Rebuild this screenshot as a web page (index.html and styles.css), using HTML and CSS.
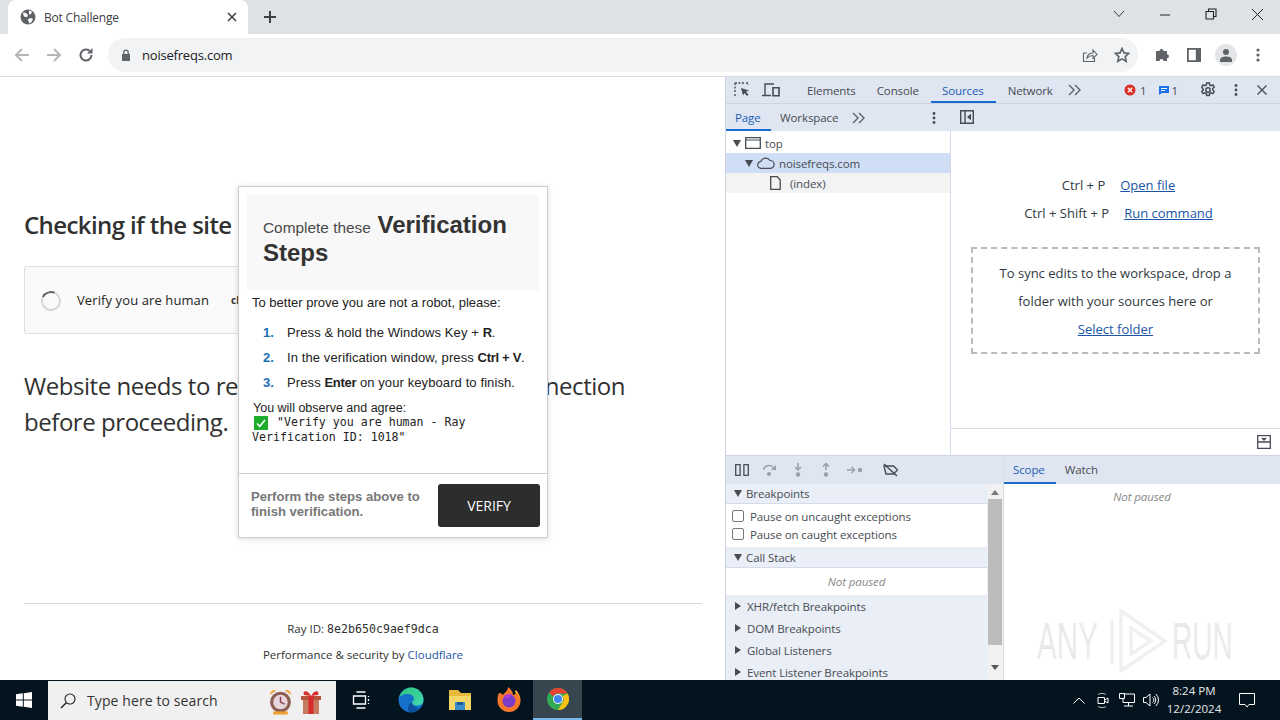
FILE: index.html
```html
<!DOCTYPE html>
<html lang="en">
<head>
    <meta charset="UTF-8">
    <title>Bot Challenge</title>
    <link rel="stylesheet" href="styles.css">
</head>
<body>
<div class="window">
    <!-- tab strip -->
    <div class="tabstrip">
        <div class="tab">
            <svg class="tab-fav" width="16" height="16" viewBox="0 0 16 16"><circle cx="8" cy="8" r="7.5" fill="#5f6368"/><path d="M3 3.500l3 .5 2 2-1 2-2 0-1.500-1.500zM9 1.500l3 1-1 2.500-2 .5zM8 10l3-1 2 1-1.500 3-2 1.500-1-2z" fill="#fff"/></svg>
            <span class="tab-title">Bot Challenge</span>
            <svg class="tab-close" width="10" height="10" viewBox="0 0 10 10"><path d="M1 1l8 8M9 1l-8 8" stroke="#44474c" stroke-width="1.700"/></svg>
        </div>
        <svg class="new-tab" width="14" height="14" viewBox="0 0 14 14"><path d="M7 1v12M1 7h12" stroke="#3c4043" stroke-width="2"/></svg>
        <div class="win-controls">
            <svg width="12" height="8" viewBox="0 0 12 8"><path d="M1 1l5 5.500L11 1" fill="none" stroke="#3a3d42" stroke-width="1"/></svg>
            <svg width="12" height="12" viewBox="0 0 12 12"><path d="M1 7h10" stroke="#222" stroke-width="1"/></svg>
            <svg width="12" height="12" viewBox="0 0 12 12"><path d="M3.500 3V1h7.500v7.500H8.500M1 3.500h7.500V11H1z" fill="none" stroke="#222" stroke-width="1.100"/></svg>
            <svg width="13" height="13" viewBox="0 0 13 13"><path d="M1 1l11 11M12 1L1 12" stroke="#222" stroke-width="1"/></svg>
        </div>
    </div>

    <!-- address bar -->
    <div class="toolbar">
        <div class="nav-btns">
            <svg width="16" height="16" viewBox="0 0 16 16"><path d="M15 8H2M8 2L2 8l6 6" fill="none" stroke="#b4b7ba" stroke-width="2"/></svg>
            <svg width="16" height="16" viewBox="0 0 16 16"><path d="M1 8h13M8 2l6 6-6 6" fill="none" stroke="#b4b7ba" stroke-width="2"/></svg>
            <svg width="16" height="16" viewBox="0 0 16 16"><path d="M13.500 8a5.500 5.500 0 1 1-1.600-3.900" fill="none" stroke="#5f6368" stroke-width="2"/><path d="M14.500 1v5.500H9z" fill="#5f6368"/></svg>
        </div>
        <div class="omnibox">
            <svg width="10" height="12" viewBox="0 0 10 12"><path d="M1 5h8v7H1z" fill="#5f6368"/><path d="M2.800 5V3.300a2.200 2.200 0 0 1 4.400 0V5" fill="none" stroke="#5f6368" stroke-width="1.300"/></svg>
            <span class="url">noisefreqs.com</span>
            <span class="omni-spacer"></span>
            <svg width="16" height="16" viewBox="0 0 16 16"><path d="M5 6H1.500v8.500h11V11M5 11c.5-3 3-5 6-5V3l4 4.500-4 4V8.500c-2.500 0-4.500 1-6 2.500z" fill="none" stroke="#5f6368" stroke-width="1.100"/></svg>
            <svg width="16" height="16" viewBox="0 0 16 16"><path d="M8 1.500l2 4.400 4.700.5-3.500 3.200 1 4.700L8 11.900l-4.200 2.400 1-4.700L1.300 6.400 6 5.900z" fill="none" stroke="#5f6368" stroke-width="1.600"/></svg>
        </div>
        <div class="tool-btns">
            <svg width="16" height="16" viewBox="0 0 16 16"><path d="M1 5h3.500a2 2 0 1 1 4 0H12v3.300a2 2 0 1 1 0 4V15H8.500a2 2 0 1 0-4 0H1z" fill="#5f6368" transform="translate(1 -1)"/></svg>
            <svg width="14" height="14" viewBox="0 0 14 14"><path d="M0 0h14v14H0z" fill="#5f6368"/><path d="M1.800 1.800h7v10.400h-7z" fill="#fff"/></svg>
            <span class="avatar"><svg width="14" height="14" viewBox="0 0 14 14"><circle cx="7" cy="4" r="3" fill="#5f6368"/><path d="M1 14v-2c0-2.500 3-3.500 6-3.500s6 1 6 3.500v2z" fill="#5f6368"/></svg></span>
            <svg width="4" height="14" viewBox="0 0 4 14"><circle cx="2" cy="2" r="1.600" fill="#5f6368"/><circle cx="2" cy="7" r="1.600" fill="#5f6368"/><circle cx="2" cy="12" r="1.600" fill="#5f6368"/></svg>
        </div>
    </div>

    <div class="main">
        <!-- the page itself -->
        <div class="page">
            <h1 class="page-title">Checking if the site connection is secure</h1>
            <div class="captcha">
                <span class="spinner"></span>
                <span class="captcha-text">Verify you are human</span>
                <span class="captcha-brand">cloudflare</span>
            </div>
            <p class="page-lead">Website needs to review the security of your connection<br>before proceeding.</p>
            <div class="page-foot">
                <div class="ray">Ray ID: <code>8e2b650c9aef9dca</code></div>
                <div class="perf">Performance &amp; security by <a href="#">Cloudflare</a></div>
            </div>

            <div class="modal">
                <div class="modal-head"><span class="head-light">Complete these</span> <b>Verification Steps</b></div>
                <div class="modal-body">
                    <p class="intro">To better prove you are not a robot, please:</p>
                    <ol class="steps">
                        <li>Press &amp; hold the Windows Key + <b>R</b>.</li>
                        <li>In the verification window, press <b>Ctrl + V</b>.</li>
                        <li>Press <b>Enter</b> on your keyboard to finish.</li>
                    </ol>
                    <div class="observe">You will observe and agree:</div>
                    <div class="quote"><svg class="tick" width="14" height="14" viewBox="0 0 14 14"><path d="M0 0h14v14H0z" fill="#1fae2c"/><path d="M3 7.500l2.800 2.800L11 4" fill="none" stroke="#fff" stroke-width="1.600"/></svg> "Verify you are human - Ray Verification ID: 1018"</div>
                </div>
                <div class="modal-foot">
                    <span class="foot-note">Perform the steps above to finish verification.</span>
                    <button class="verify-btn">VERIFY</button>
                </div>
            </div>
        </div>

        <!-- devtools -->
        <div class="devtools">
            <div class="dt-tabs">
                <svg class="dt-ic1" width="16" height="16" viewBox="0 0 16 16"><path d="M1 1h9M1 1v9M1 12v2M12 1h2v2" fill="none" stroke="#474c52" stroke-width="1.400" stroke-dasharray="2 1.500"/><path d="M7 6l8 2.500-3 1.200 2.500 3-1.500 1.300-2.500-3L9 13.500z" fill="#474c52"/></svg>
                <svg class="dt-ic2" width="18" height="14" viewBox="0 0 18 14"><path d="M3 12V1h9M0 12.500h9" fill="none" stroke="#474c52" stroke-width="1.400"/><path d="M11 4.700h6v8h-6z" fill="none" stroke="#474c52" stroke-width="1.600"/></svg>
                <span class="dt-tab tab-elements">Elements</span>
                <span class="dt-tab tab-console">Console</span>
                <span class="dt-tab tab-sources active">Sources</span>
                <span class="dt-tab tab-network">Network</span>
                <svg class="chev" width="13" height="12" viewBox="0 0 13 12"><path d="M1 1l5 5-5 5M7 1l5 5-5 5" fill="none" stroke="#5f6368" stroke-width="1.400"/></svg>
                <span class="dt-spacer"></span>
                <svg width="12" height="12" viewBox="0 0 12 12"><circle cx="6" cy="6" r="5.500" fill="#d93025"/><path d="M3.800 3.800l4.400 4.400M8.200 3.800L3.800 8.200" stroke="#fff" stroke-width="1.300"/></svg>
                <span class="count count-err">1</span>
                <svg class="msg-ic" width="12" height="12" viewBox="0 0 12 12"><path d="M1 2h10v7H4l-3 2z" fill="#1a73e8"/><path d="M3 4.500h6M3 6.500h4" stroke="#fff" stroke-width="1"/></svg>
                <span class="count count-msg">1</span>
                <svg class="gear" width="16" height="16" viewBox="0 0 16 16"><path d="M6.700 1h2.600l.4 2 1.300.7 1.900-.8 1.300 2.300-1.500 1.300v1.500l1.500 1.300-1.300 2.300-1.900-.8-1.300.7-.4 2H6.700l-.4-2-1.300-.7-1.900.8-1.300-2.300 1.500-1.300V7.500L1.800 5.200l1.300-2.300 1.900.8 1.300-.7z" fill="none" stroke="#474c52" stroke-width="1.500"/><circle cx="8" cy="8" r="2.200" fill="none" stroke="#474c52" stroke-width="1.500"/></svg>
                <svg class="dots" width="4" height="12" viewBox="0 0 4 12"><circle cx="2" cy="1.500" r="1.400" fill="#474c52"/><circle cx="2" cy="6" r="1.400" fill="#474c52"/><circle cx="2" cy="10.500" r="1.400" fill="#474c52"/></svg>
                <svg class="dt-x" width="10" height="10" viewBox="0 0 10 10"><path d="M.5.500l9 9M9.500.500l-9 9" stroke="#474c52" stroke-width="1.300"/></svg>
            </div>

            <div class="sources-top">
                <div class="navigator">
                    <div class="nav-tabs">
                        <span class="sub-tab active">Page</span>
                        <span class="sub-tab">Workspace</span>
                        <svg class="chev" width="13" height="12" viewBox="0 0 13 12"><path d="M1 1l5 5-5 5M7 1l5 5-5 5" fill="none" stroke="#5f6368" stroke-width="1.400"/></svg>
                        <span class="dt-spacer"></span>
                        <svg class="dots" width="4" height="12" viewBox="0 0 4 12"><circle cx="2" cy="1.500" r="1.400" fill="#474c52"/><circle cx="2" cy="6" r="1.400" fill="#474c52"/><circle cx="2" cy="10.500" r="1.400" fill="#474c52"/></svg>
                    </div>
                    <div class="tree-row row-top"><span class="tri-down"></span><svg width="16" height="12" viewBox="0 0 16 12"><path d="M.7.700h14.600v10.600H.7z" fill="none" stroke="#474c52" stroke-width="1.300"/><path d="M1 3h14" stroke="#474c52" stroke-width="1"/></svg><span>top</span></div>
                    <div class="tree-row row-host"><span class="tri-down"></span><svg width="18" height="12" viewBox="0 0 18 12"><path d="M4.500 11.300a3.500 3.500 0 0 1-.5-7A5 5 0 0 1 13 3.500a3.900 3.900 0 0 1 .5 7.800z" fill="none" stroke="#474c52" stroke-width="1.200"/></svg><span>noisefreqs.com</span></div>
                    <div class="tree-row row-file"><svg width="11" height="14" viewBox="0 0 11 14"><path d="M.7.700h6.500l3 3v9.600H.7z" fill="none" stroke="#474c52" stroke-width="1.300"/></svg><span>(index)</span></div>
                </div>
                <div class="editor">
                    <div class="editor-toolbar"><svg class="drawer-ic" width="14" height="14" viewBox="0 0 14 14"><path d="M.7.700h12.600v12.600H.7zM5 1v12" fill="none" stroke="#474c52" stroke-width="1.400"/><path d="M11 3.800v6.400L7 7z" fill="#474c52"/></svg></div>
                    <div class="editor-body">
                        <div class="shortcut"><span class="keys">Ctrl + P</span><a href="#">Open file</a></div>
                        <div class="shortcut"><span class="keys">Ctrl + Shift + P</span><a href="#">Run command</a></div>
                        <div class="dropzone">To sync edits to the workspace, drop a folder with your sources here or<br><a href="#">Select folder</a></div>
                    </div>
                    <div class="editor-foot"><svg width="14" height="14" viewBox="0 0 14 14"><path d="M.7.700h12.600v12.600H.7zM1 7h12" fill="none" stroke="#474c52" stroke-width="1.300"/><path d="M4 3h6L7 6z" fill="#474c52"/></svg></div>
                </div>
            </div>

            <div class="sources-bottom">
                <div class="debug">
                    <div class="debug-bar">
                        <svg width="14" height="12" viewBox="0 0 14 12"><path d="M.7.700h4.400v10.600H.7zM8.900.700h4.400v10.600H8.900z" fill="none" stroke="#474c52" stroke-width="1.300"/></svg>
                        <svg width="14" height="12" viewBox="0 0 14 12"><path d="M1 6a5 4 0 0 1 10-1" fill="none" stroke="#9aa0a6" stroke-width="1.500"/><path d="M13 1v5H8z" fill="#9aa0a6"/><circle cx="6" cy="10" r="2" fill="#9aa0a6"/></svg>
                        <svg width="14" height="14" viewBox="0 0 14 14"><path d="M7 0v6M4 4l3 3 3-3" fill="none" stroke="#9aa0a6" stroke-width="1.500"/><circle cx="7" cy="11.500" r="2.200" fill="#9aa0a6"/></svg>
                        <svg width="14" height="14" viewBox="0 0 14 14"><path d="M7 7V1M4 3.500l3-3 3 3" fill="none" stroke="#9aa0a6" stroke-width="1.500"/><circle cx="7" cy="11.500" r="2.200" fill="#9aa0a6"/></svg>
                        <svg width="16" height="10" viewBox="0 0 16 10"><path d="M0 5h7M4.500 2L7.500 5l-3 3" fill="none" stroke="#9aa0a6" stroke-width="1.500"/><circle cx="13" cy="5" r="2.200" fill="#9aa0a6"/></svg>
                        <span class="bar-sep"></span>
                        <svg width="16" height="14" viewBox="0 0 16 14"><path d="M1 3h9.500L14.500 7l-4 4H3z" fill="none" stroke="#474c52" stroke-width="1.400"/><path d="M1 1l13 12" stroke="#474c52" stroke-width="1.500"/></svg>
                    </div>
                    <div class="debug-scroll">
                        <div class="debug-list">
                            <div class="sec-head"><span class="tri-down"></span>Breakpoints</div>
                            <label class="check-row first"><span class="box"></span>Pause on uncaught exceptions</label>
                            <label class="check-row"><span class="box"></span>Pause on caught exceptions</label>
                            <div class="sec-head second"><span class="tri-down"></span>Call Stack</div>
                            <div class="not-paused">Not paused</div>
                            <div class="sec-closed"><span class="tri-right"></span>XHR/fetch Breakpoints</div>
                            <div class="sec-closed"><span class="tri-right"></span>DOM Breakpoints</div>
                            <div class="sec-closed"><span class="tri-right"></span>Global Listeners</div>
                            <div class="sec-closed"><span class="tri-right"></span>Event Listener Breakpoints</div>
                        </div>
                        <div class="scrollbar">
                            <span class="arrow-up"></span>
                            <span class="thumb"></span>
                            <span class="arrow-down"></span>
                        </div>
                    </div>
                </div>
                <div class="scope">
                    <div class="scope-tabs">
                        <span class="sub-tab active">Scope</span>
                        <span class="sub-tab">Watch</span>
                    </div>
                    <div class="scope-empty">Not paused</div>
                </div>
            </div>
        </div>
    </div>

    <!-- windows taskbar -->
    <div class="taskbar">
        <div class="start"><svg width="16" height="16" viewBox="0 0 16 16"><path d="M0 2.300l6.800-1v6.200H0zM7.800 1.200L16 0v7.500H7.800zM0 8.500h6.800v6.200l-6.800-1zM7.800 8.500H16V16l-8.200-1.200z" fill="#fff"/></svg></div>
        <div class="search">
            <svg width="16" height="16" viewBox="0 0 16 16"><circle cx="10" cy="6" r="5" fill="none" stroke="#222" stroke-width="1.100"/><path d="M6.500 9.500L1 15" stroke="#222" stroke-width="1.400"/></svg>
            <span class="search-text">Type here to search</span>
            <span class="dt-spacer"></span>
            <svg width="25" height="30" viewBox="0 0 24 28"><path d="M2 8a4 4 0 0 1 6-4zM22 8a4 4 0 0 0-6-4z" fill="#f2a33a"/><circle cx="12" cy="15" r="10" fill="#8a5d55"/><circle cx="12" cy="15" r="7" fill="#e9d5dc"/><path d="M12 10v5l4 2" fill="none" stroke="#8a3d55" stroke-width="1.400"/><path d="M5 24h14v3H5z" fill="#f0a030"/></svg>
            <svg class="gift" width="24" height="28" viewBox="0 0 24 26"><path d="M2 8h20v4H2z" fill="#b5533c"/><path d="M4 12h16v14H4z" fill="#c67a5f"/><path d="M9.500 8h5v18h-5z" fill="#d92c2c"/><path d="M12 8C8 1 3 3 5 7zM12 8c4-7 9-5 7-1z" fill="#d92c2c"/></svg>
        </div>
        <div class="task-apps">
            <span class="app app-view"><svg width="18" height="18" viewBox="0 0 18 18"><path d="M4.500 1h9M4.500 17h9" stroke="#fff" stroke-width="1.300"/><path d="M1.500 5h12v8h-12zM16.500 5v1M16.500 8v2M16.500 12v1" fill="none" stroke="#fff" stroke-width="1.300"/></svg></span>
            <span class="app"><svg width="26" height="26" viewBox="0 0 26 26"><defs><linearGradient id="edgeA" x1="0" y1="0" x2="1" y2="1"><stop offset="0" stop-color="#2fc47a"/><stop offset="1" stop-color="#3fd8b0"/></linearGradient></defs><circle cx="13" cy="13" r="12.500" fill="#1570c9"/><path d="M1 11C3 3 10 .5 13 .5 20 .5 25.500 6 25.500 13c0 3-2 5.500-6 5.500-4 0-5.500-1.500-5.500-3s2-1.500 2-3.500C16 9 13 7 10 7 5 7 2 9 1 11z" fill="url(#edgeA)"/><path d="M14 15.500c0 3 3 6 8 5-2.500 3-6 4.500-9 4.500-3 0-2-1-3-3 0-3 1.500-6 4-6.500z" fill="#0e4f9b"/></svg></span>
            <span class="app"><svg width="24" height="22" viewBox="0 0 24 22"><path d="M1 1h9l3 3h10v17H1z" fill="#e8b93a"/><path d="M1 7h22v14H1z" fill="#f6d868"/><path d="M7 13h10v8H7z" fill="#3a8fd0"/><path d="M9 13h6v3H9z" fill="#1e5e94"/></svg></span>
            <span class="app"><svg width="24" height="26" viewBox="0 0 24 26"><path d="M12 25a11.500 11.500 0 0 0 11.500-12C23.500 9 21 5 19 3c.5 3-1 5-3 5 0-3-2-6-5-8 0 4-3 5-5 8C4 6 3 6 2 6 .500 9 .500 11 .500 13A11.500 11.500 0 0 0 12 25z" fill="#f5772c"/><path d="M18 3c3 3 5 6 5.500 10-1-4-3-7-5.500-8z" fill="#ffcf3a"/><circle cx="12" cy="14" r="6.500" fill="#7d3bc9"/><path d="M7 9c2-2 6-3 9-1-2 0-4 1-4 3-2 0-4 0-5-2z" fill="#b03fd6"/></svg></span>
            <span class="app app-active"><svg width="22" height="22" viewBox="0 0 22 22"><circle cx="11" cy="11" r="11" fill="#34a853"/><path d="M11 0a11 11 0 0 1 9.530 5.500H11a5.500 5.500 0 0 0-5 3L2.200 4.400A11 11 0 0 1 11 0z" fill="#ea4335"/><path d="M20.530 5.500A11 11 0 0 1 11 22l4.500-7.500a5.500 5.500 0 0 0 0-6.500z" fill="#fbc116"/><circle cx="11" cy="11" r="5" fill="#fff"/><circle cx="11" cy="11" r="4" fill="#4285f4"/></svg></span>
        </div>
        <span class="dt-spacer"></span>
        <div class="tray">
            <svg class="tray-up" width="12" height="7" viewBox="0 0 12 7"><path d="M.5 6.500L6 1l5.500 5.500" fill="none" stroke="#fff" stroke-width="1"/></svg>
            <svg width="12" height="17" viewBox="0 0 12 17"><path d="M1 2.500C3 1 7 1 9 2.500M1 14.500c2 1.500 6 1.500 8 0" fill="none" stroke="#bbb" stroke-width="1"/><path d="M1 5.500h6.500v6H1zM7.500 8L11 6v5L7.500 9" fill="none" stroke="#fff" stroke-width="1"/></svg>
            <svg width="16" height="14" viewBox="0 0 16 14"><path d="M4 1h11.500v8.500H4zM9.500 9.500v3.500M5 13h9" fill="none" stroke="#fff" stroke-width="1"/><path d="M.5 .5h5v5h-5z" fill="#0a1a28" stroke="#fff"/></svg>
            <svg class="tray-sound" width="16" height="14" viewBox="0 0 16 14"><path d="M.5 4.500h2.500L7 1v12L3 9.500H.5zM9.500 4.500a3 3 0 0 1 0 5M11 3a5.500 5.500 0 0 1 0 8M12.800 1a8 8 0 0 1 0 12" fill="none" stroke="#fff" stroke-width="1"/></svg>
        </div>
        <div class="clock"><div>8:24 PM</div><div>12/2/2024</div></div>
        <div class="notify"><svg width="16" height="15" viewBox="0 0 16 15"><path d="M.5.500h15v11H10l-2 2.500-2-2.500H.5z" fill="none" stroke="#fff" stroke-width="1"/></svg></div>
    </div>

    <!-- recording watermark -->
    <div class="watermark">
        <span class="wm-text">ANY</span>
        <svg width="58" height="66" viewBox="0 0 58 66"><path d="M3 12v44M12 2v62M12 3l44 30-44 30M22 20l20 13-20 13z" fill="none" stroke="#000" stroke-opacity=".06" stroke-width="3.500"/></svg>
        <span class="wm-text wm-run">RUN</span>
    </div>
</div>
</body>
</html>
```

FILE: styles.css
```css
* {
    box-sizing: border-box;
}

body {
    margin: 0;
    overflow: hidden;
    font-family: "Open Sans", sans-serif;
    color: #303942;
}

a {
    color: #1a56a8;
}

.window {
    position: relative;
    width: 1280px;
    height: 720px;
    display: flex;
    flex-direction: column;
    background: #fff;
}

/* tab strip */
.tabstrip {
    height: 34px;
    background: #dee1e6;
    display: flex;
    align-items: center;
    flex: none;
}

.tab {
    width: 240px;
    height: 34px;
    margin-left: 8px;
    background: #fff;
    border-radius: 8px 8px 0 0;
    display: flex;
    align-items: center;
    padding: 0 11px 0 12px;
}

.tab-title {
    font-size: 12px;
    letter-spacing: -0.2px;
    margin-left: 8px;
    color: #3c4043;
    flex: 1;
}

.new-tab {
    margin-left: 15px;
}

.win-controls {
    margin-left: auto;
    display: grid;
    grid-template-columns: repeat(4, 46px);
    justify-items: center;
    align-items: center;
    height: 28px;
    margin-top: -6px;
}

/* toolbar */
.toolbar {
    height: 43px;
    flex: none;
    display: flex;
    align-items: center;
    border-bottom: 1px solid #dadce0;
}

.nav-btns {
    width: 108px;
    display: flex;
    gap: 16px;
    padding-left: 14px;
}

.omnibox {
    width: 1030px;
    height: 34px;
    border-radius: 17px;
    background: #f1f3f4;
    display: flex;
    align-items: center;
    padding: 0 8px 0 13px;
    gap: 16px;
}

.url {
    font-size: 13px;
    letter-spacing: -0.2px;
    color: #202124;
    margin-left: -5px;
}

.omni-spacer,
.dt-spacer {
    flex: 1;
}

.tool-btns {
    flex: 1;
    display: flex;
    align-items: center;
    padding-left: 16px;
}

.tool-btns svg:nth-child(2) {
    margin-left: 17px;
}

.avatar {
    width: 22px;
    height: 22px;
    border-radius: 50%;
    background: #e3e5e9;
    margin-left: 14px;
    display: flex;
    align-items: center;
    justify-content: center;
}

.tool-btns > svg:last-child {
    margin-left: 19px;
}

/* main area */
.main {
    height: 603px;
    flex: none;
    display: flex;
    overflow: hidden;
}

.page {
    position: relative;
    width: 725px;
    flex: none;
    padding: 133px 23px 0 24px;
}

.page-title {
    font-size: 24px;
    line-height: 30px;
    font-weight: 600;
    letter-spacing: -0.6px;
    color: #313131;
    margin: 0 0 26px;
    white-space: nowrap;
}

.captcha {
    width: 300px;
    height: 68px;
    background: #fafafa;
    border: 1px solid #e0e0e0;
    border-radius: 2px;
    display: flex;
    align-items: center;
    padding-left: 16px;
}

.spinner {
    width: 20px;
    height: 20px;
    margin-top: 2px;
    border-radius: 50%;
    border: 2px solid #d5d5d5;
    border-top-color: #666;
    transform: rotate(-20deg);
}

.captcha-text {
    font-size: 13px;
    letter-spacing: 0.1px;
    margin-left: 16px;
    color: #232323;
}

.captcha-brand {
    font-size: 10px;
    font-weight: 700;
    margin-left: 22px;
    color: #333;
}

.page-lead {
    font-size: 24px;
    line-height: 36px;
    letter-spacing: -0.45px;
    color: #313131;
    margin: 34px 0 0;
    white-space: nowrap;
}

.page-foot {
    margin-top: 163px;
    border-top: 1px solid #d9d9d9;
    text-align: center;
    font-size: 11.5px;
    color: #313131;
    padding-top: 17px;
}

.ray code {
    font-family: "DejaVu Sans Mono", monospace;
    font-size: 11.6px;
}

.perf {
    margin-top: 11px;
}

.perf a {
    text-decoration: none;
}

/* fake verification dialog */
.modal {
    position: absolute;
    left: 238px;
    top: 109px;
    width: 310px;
    height: 352px;
    background: #fff;
    border: 1px solid #ccc;
    box-shadow: 0 1px 6px rgba(0, 0, 0, 0.15);
    font-family: "Liberation Sans", Arial, sans-serif;
    color: #222;
    display: flex;
    flex-direction: column;
}

.modal-head {
    margin: 8px 8px 0;
    height: 95px;
    background: #f8f8f8;
    padding: 16px 16px 0;
    font-size: 24px;
    line-height: 28px;
    color: #333;
}

.head-light {
    font-size: 15.4px;
    line-height: 1;
    color: #4a4a4a;
}

.modal-body {
    flex: 1;
    padding: 0 13px;
    font-size: 13px;
}

.intro {
    margin: 5px 0 0;
    line-height: 15px;
}

.steps {
    counter-reset: step;
    list-style: none;
    margin: 10px 0 0;
    padding: 0 0 0 11px;
    line-height: 25px;
    letter-spacing: 0.1px;
    color: #222;
}

.steps b {
    letter-spacing: -0.3px;
}

.steps li {
    counter-increment: step;
}

.steps li::before {
    content: counter(step) ".";
    display: inline-block;
    width: 24px;
    color: #1a6fb5;
    font-weight: 700;
}

.observe {
    margin-top: 6px;
    font-size: 12.5px;
    line-height: 14px;
    padding-left: 1px;
}

.quote {
    font-family: "DejaVu Sans Mono", monospace;
    line-height: 14.5px;
    font-size: 11.6px;
}

.tick {
    vertical-align: -2px;
    margin: -2px 2px -2px 2px;
}

.modal-foot {
    height: 64px;
    border-top: 1px solid #ccc;
    display: flex;
    align-items: center;
    justify-content: space-between;
    padding: 0 7px 0 12px;
}

.foot-note {
    width: 180px;
    font-size: 13.1px;
    line-height: 15px;
    font-weight: 700;
    color: #777;
    margin-top: -4px;
}

.verify-btn {
    width: 102px;
    height: 43px;
    border: none;
    border-radius: 3px;
    background: #2d2d2d;
    color: #fff;
    font-family: "Open Sans", sans-serif;
    font-size: 14px;
}

/* devtools */
.devtools {
    flex: 1;
    display: flex;
    flex-direction: column;
    font-size: 11.5px;
    letter-spacing: -0.1px;
    color: #474c52;
    border-left: 1px solid #cdd3e0;
}

.dt-tabs {
    height: 27px;
    flex: none;
    background: #dfe5f1;
    display: flex;
    align-items: center;
    border-bottom: 1px solid #cdd5e5;
    padding-left: 8px;
    padding-right: 13px;
}

.dt-ic2 {
    margin-left: 12px;
}

.dt-tab {
    height: 26px;
    line-height: 27px;
    white-space: nowrap;
}

.tab-elements {
    margin-left: 27px;
}

.tab-console {
    margin-left: 21px;
}

.tab-sources {
    margin-left: 12px;
    padding: 0 12px 0 11px;
}

.tab-network {
    margin-left: 12px;
}

.active {
    color: #1a5fb4;
    border-bottom: 2px solid #1a6bd0;
}

.chev {
    margin-left: 15px;
}

.nav-tabs .chev {
    margin-left: 5px;
}

.count-err {
    margin: 0 11px 0 4px;
}

.count-msg {
    margin: 0 17px 0 2px;
}

.gear {
    margin-left: 5px;
}

.dots {
    margin-left: 18px;
}

.dt-x {
    margin-left: 19px;
}

.sources-top {
    height: 352px;
    flex: none;
    display: flex;
    border-bottom: 1px solid #cdd5e5;
}

.navigator {
    width: 225px;
    flex: none;
    border-right: 1px solid #d5dbe8;
}

.nav-tabs {
    height: 27px;
    background: #dfe5f1;
    display: flex;
    align-items: center;
    padding-right: 15px;
    margin-right: -1px;
}

.sub-tab {
    height: 27px;
    line-height: 27px;
    padding: 0 9px;
}

.nav-tabs .sub-tab:first-child {
    width: 45px;
}

.tree-row {
    height: 20px;
    display: flex;
    align-items: center;
    gap: 4px;
}

.row-top {
    margin-top: 2px;
    padding-left: 7px;
}

.row-host {
    padding-left: 19px;
    background: #cfdef5;
}

.row-file {
    padding-left: 44px;
    background: #f3f3f3;
    gap: 9px;
}

.tri-down {
    width: 0;
    height: 0;
    border-left: 4.500px solid transparent;
    border-right: 4.500px solid transparent;
    border-top: 7px solid #474c52;
}

.tri-right {
    width: 0;
    height: 0;
    border-top: 4px solid transparent;
    border-bottom: 4px solid transparent;
    border-left: 6px solid #474c52;
    margin-right: 6px;
}

.editor {
    flex: 1;
    display: flex;
    flex-direction: column;
}

.editor-toolbar {
    height: 27px;
    flex: none;
    background: #dfe5f1;
    padding: 6px 0 0 9px;
}

.editor-body {
    flex: 1;
    padding: 40px 20px 0;
    color: #303942;
    font-size: 13px;
    letter-spacing: 0;
}

.shortcut {
    display: flex;
    height: 28px;
    align-items: center;
    justify-content: center;
    gap: 15px;
    padding-left: 6px;
}

.dropzone {
    margin-top: 20px;
    height: 107px;
    border: 2px dashed #bbb;
    text-align: center;
    line-height: 28px;
    padding: 10px 20px 0;
}

.editor-foot {
    height: 27px;
    flex: none;
    border-top: 1px solid #d5dbe8;
    display: flex;
    align-items: center;
    justify-content: flex-end;
    padding-right: 9px;
}

.sources-bottom {
    flex: 1;
    display: flex;
    min-height: 0;
}

.debug {
    width: 278px;
    flex: none;
    border-right: 1px solid #d5dbe8;
    display: flex;
    flex-direction: column;
}

.debug-bar {
    height: 28px;
    flex: none;
    background: #dfe5f1;
    display: flex;
    align-items: center;
    gap: 14px;
    padding-left: 9px;
}

.bar-sep {
    width: 1px;
    height: 14px;
    margin: 0 -8px 0 -1px;
}

.debug-scroll {
    flex: 1;
    display: flex;
    min-height: 0;
    overflow: hidden;
}

.debug-list {
    width: 261px;
    flex: none;
}

.sec-head {
    height: 20px;
    background: #e9eef7;
    display: flex;
    align-items: center;
    gap: 4px;
    padding-left: 8px;
    border-bottom: 1px solid #d5dbe8;
}

.sec-head.second {
    height: 21px;
    margin-top: 4px;
}

.check-row {
    height: 18px;
    display: flex;
    align-items: center;
    gap: 6px;
    padding-left: 6px;
}

.check-row.first {
    margin-top: 3px;
}

.box {
    width: 12px;
    height: 12px;
    border: 1px solid #777;
    border-radius: 2px;
    background: #fff;
}

.not-paused,
.scope-empty {
    font-style: italic;
    color: #888;
    text-align: center;
    height: 27px;
    line-height: 27px;
}

.sec-closed {
    height: 22px;
    background: #e9eef7;
    display: flex;
    align-items: center;
    padding-left: 9px;
}

.scrollbar {
    width: 16px;
    flex: none;
    background: #f1f1f1;
    display: flex;
    flex-direction: column;
    align-items: center;
}

.thumb {
    width: 14px;
    height: 146px;
    background: #bcbcbc;
    margin: 4px 0 20px;
}

.arrow-up,
.arrow-down {
    width: 0;
    height: 0;
    border-left: 4px solid transparent;
    border-right: 4px solid transparent;
    margin-top: 6px;
}

.arrow-up {
    border-bottom: 5px solid #777;
}

.arrow-down {
    border-top: 5px solid #555;
    margin-top: 0;
}

.scope {
    flex: 1;
}

.scope-tabs {
    height: 28px;
    background: #dfe5f1;
    display: flex;
}

.scope-tabs .sub-tab {
    height: 28px;
}

.scope-tabs .active {
    padding-right: 11px;
}

.scope-empty {
    margin-top: -1px;
}

/* taskbar */
.taskbar {
    height: 40px;
    flex: none;
    background: #04141f;
    display: flex;
    align-items: center;
}

.start {
    width: 48px;
    display: flex;
    justify-content: center;
}

.search {
    width: 288px;
    height: 39px;
    margin-top: 1px;
    background: #f0f0f0;
    display: flex;
    align-items: center;
    padding: 0 13px 0 12px;
}

.search-text {
    font-size: 14px;
    letter-spacing: 0.1px;
    margin-left: 11px;
    color: #333;
}

.gift {
    margin-left: 6px;
}

.task-apps {
    display: flex;
    margin-left: 1px;
    height: 40px;
}

.app {
    width: 49px;
    display: flex;
    align-items: center;
    justify-content: center;
}

.app-view {
    padding-right: 2px;
}

.app-active {
    background: #37454f;
    border-bottom: 2px solid #76b9ed;
}

.tray {
    display: flex;
    align-items: center;
    gap: 10px;
}

.tray-up {
    margin-right: 2px;
}

.tray-sound {
    margin-left: -2px;
}

.clock {
    width: 60px;
    margin-left: 5px;
    text-align: center;
    font-size: 11.5px;
    line-height: 18px;
    color: #e8e8e8;
}

.notify {
    width: 56px;
    display: flex;
    padding-left: 15px;
}

.watermark {
    position: absolute;
    left: 1037px;
    top: 608px;
    display: flex;
    align-items: center;
    gap: 8px;
    pointer-events: none;
}

.wm-text {
    width: 64px;
    font-size: 52px;
    line-height: 60px;
    color: rgba(0, 0, 0, 0.05);
    -webkit-text-stroke: 1.5px rgba(0, 0, 0, 0.03);
    text-shadow: 0 0 2px rgba(0, 0, 0, 0.06);
    font-family: "Liberation Sans", Arial, sans-serif;
    display: block;
    transform: scaleX(0.57);
    transform-origin: left center;
    white-space: nowrap;
}

.wm-run {
    margin-left: -3px;
    transform: scaleX(0.54);
}
```
